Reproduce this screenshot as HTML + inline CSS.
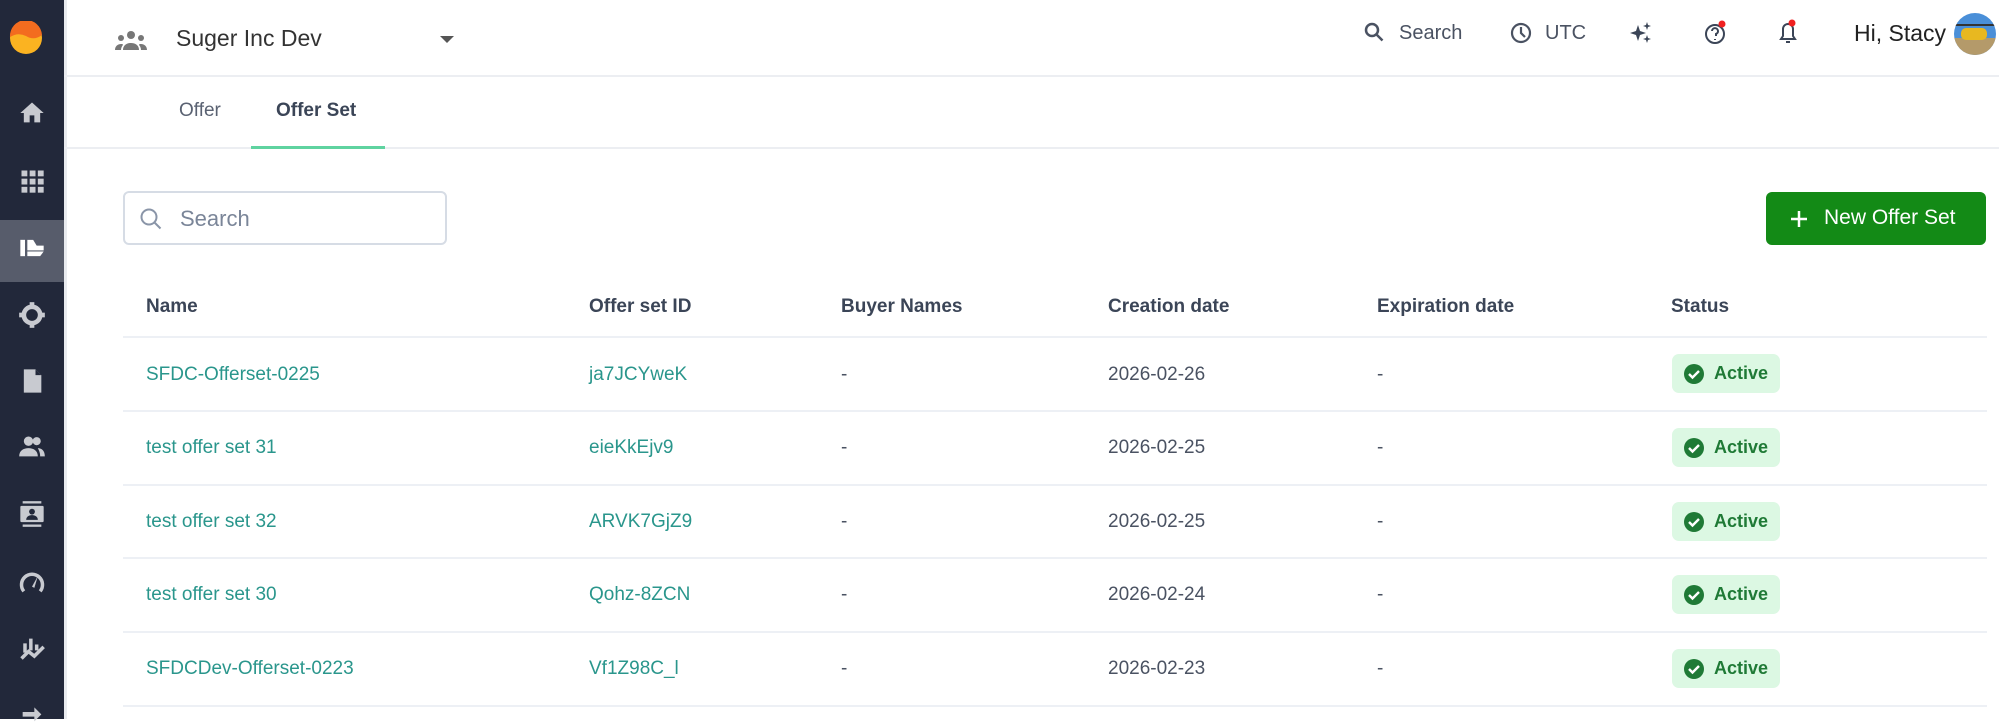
<!DOCTYPE html>
<html><head><meta charset="utf-8"><style>
*{margin:0;padding:0;box-sizing:border-box}
body{width:1999px;height:719px;overflow:hidden;background:#fff;font-family:"Liberation Sans",sans-serif;position:relative;color:#3d4656}
.sb{position:absolute;left:0;top:0;width:64px;height:719px;background:#22283a}
.sb .act{position:absolute;left:0;top:220px;width:64px;height:62px;background:#575c6b}
.ic{position:absolute;left:18px;width:28px;height:28px}
.a{position:absolute;white-space:nowrap}
.hline{position:absolute;left:64px;right:0;height:2px;background:#eceef2}
.row{position:absolute;left:123px;width:1864px;height:2px;background:#edf0f5}
.t{font-size:19px;color:#4a5262}
.l{font-size:19px;color:#2a968c}
.h{font-size:19px;color:#3b4557;font-weight:bold}
.badge{position:absolute;left:1672px;width:108px;height:39px;background:#dcf8e3;border-radius:7px;color:#1f7a36;font-weight:bold;font-size:18px;line-height:39px;padding-left:42px}
.badge svg{position:absolute;left:12px;top:10px}
</style></head><body>
<div class="sb">
<svg style="position:absolute;left:9px;top:21px" width="34" height="34" viewBox="0 0 34 34"><circle cx="17" cy="17" r="16" fill="#fbb321"/><path d="M1 16 A16 16 0 0 1 33 14 Q25 20 17 15 Q9 11 1 16Z" fill="#f36c1f"/></svg>
<div class="act"></div>
<svg class="ic" style="top:99px" viewBox="0 0 24 24"><path d="M10 20v-6h4v6h5v-8h3L12 3 2 12h3v8z" fill="#c8cad0"/></svg>
<svg class="ic" style="top:167px" viewBox="0 0 24 24" fill="#c8cad0"><rect x="3" y="3" width="5" height="5"/><rect x="10" y="3" width="5" height="5"/><rect x="17" y="3" width="5" height="5"/><rect x="3" y="10" width="5" height="5"/><rect x="10" y="10" width="5" height="5"/><rect x="17" y="10" width="5" height="5"/><rect x="3" y="17" width="5" height="5"/><rect x="10" y="17" width="5" height="5"/><rect x="17" y="17" width="5" height="5"/></svg>
<svg class="ic" style="top:234px" viewBox="0 0 24 24" fill="#fff"><rect x="2" y="5" width="4" height="14"/><path d="M8 5h5l3 5h6v4H8z M8 15h14l-3 4H8z"/></svg>
<svg class="ic" style="top:301px" viewBox="0 0 24 24"><circle cx="12" cy="12" r="7" fill="none" stroke="#c8cad0" stroke-width="4"/><g fill="#c8cad0"><rect x="10" y="1" width="4" height="4"/><rect x="10" y="19" width="4" height="4"/><rect x="1" y="10" width="4" height="4"/><rect x="19" y="10" width="4" height="4"/></g></svg>
<svg class="ic" style="top:367px" viewBox="0 0 24 24"><path d="M5 2h10l5 5v15H5z" fill="#c8cad0"/><path d="M15 2v5h5" fill="#22283a"/></svg>
<svg class="ic" style="top:433px" viewBox="0 0 24 24" fill="#c8cad0"><circle cx="9" cy="7" r="4"/><circle cx="16" cy="7" r="3.5"/><path d="M1 20c0-5 4-7 8-7s8 2 8 7z M17 13c3 0 6 2 6 7h-4c0-3-1-5-2-7z"/></svg>
<svg class="ic" style="top:500px" viewBox="0 0 24 24" fill="#c8cad0"><rect x="4" y="1" width="16" height="2"/><rect x="4" y="21" width="16" height="2"/><rect x="2" y="5" width="20" height="14" rx="1"/><circle cx="12" cy="10" r="2.5" fill="#22283a"/><path d="M7 17c0-3 3-4 5-4s5 1 5 4z" fill="#22283a"/></svg>
<svg class="ic" style="top:568px" viewBox="0 0 24 24"><path d="M5 20A9 9 0 1 1 19 20" fill="none" stroke="#c8cad0" stroke-width="3"/><path d="M12 16L17 7l-3 10z" fill="#c8cad0"/></svg>
<svg class="ic" style="top:634px" viewBox="0 0 24 24" fill="none" stroke="#c8cad0" stroke-width="3"><path d="M6 8v8M11 4v10M16 9v5M3 21l6-6 5 4 8-8"/></svg>
<svg class="ic" style="top:698px" viewBox="0 0 24 24" fill="#c8cad0"><path d="M4 12h10V8l6 6-6 6v-4H4z"/></svg>
</div>
<div style="position:absolute;left:64px;top:0;width:3px;height:719px;background:#e9ebef"></div>
<svg class="a" style="left:114px;top:30px" width="34" height="22" viewBox="0 0 34 22" fill="#777"><circle cx="17" cy="5" r="4"/><circle cx="7" cy="8" r="3"/><circle cx="27" cy="8" r="3"/><path d="M9 20c0-5 4-7 8-7s8 2 8 7z M1 20c0-4 3-6 6-6 1 0 2 0 2 1-1 1-2 3-2 5z M33 20c0-4-3-6-6-6-1 0-2 0-2 1 1 1 2 3 2 5z"/></svg>
<div class="a" style="left:176px;top:25px;font-size:23px;color:#333">Suger Inc Dev</div>
<svg class="a" style="left:440px;top:36px" width="14" height="8"><path d="M0 0h14L7 7z" fill="#555"/></svg>
<svg class="a" style="left:1364px;top:22px" width="20" height="22" fill="none" stroke="#4a5262" stroke-width="2.5"><circle cx="8" cy="8" r="6"/><path d="M12.5 12.5l6 6"/></svg>
<div class="a" style="left:1399px;top:22px;font-size:20px;color:#4a5262">Search</div>
<svg class="a" style="left:1510px;top:22px" width="22" height="22" fill="none" stroke="#4a5262" stroke-width="2.2"><circle cx="11" cy="11" r="9"/><path d="M11 5v6l4 4"/></svg>
<div class="a" style="left:1545px;top:22px;font-size:20px;color:#4a5262">UTC</div>
<svg class="a" style="left:1629px;top:21px" width="24" height="24" fill="#3b4557"><path d="M9 4l2 6 6 2-6 2-2 6-2-6-6-2 6-2z M18 1l1 3 3 1-3 1-1 3-1-3-3-1 3-1z M18 14l1 3 3 1-3 1-1 3-1-3-3-1 3-1z"/></svg>
<svg class="a" style="left:1704px;top:20px" width="26" height="26" fill="none" stroke="#3b4557" stroke-width="2"><circle cx="11" cy="14" r="9"/><path d="M8 11a3 3 0 1 1 4 3v2M11 19v1"/><circle cx="18" cy="4" r="3.5" fill="#f02020" stroke="none"/></svg>
<svg class="a" style="left:1776px;top:18px" width="26" height="28" fill="none" stroke="#3b4557" stroke-width="2"><path d="M5 21h14l-2-3V11a5 5 0 0 0-10 0v7z M10 24h4"/><circle cx="16" cy="5" r="3.5" fill="#f02020" stroke="none"/></svg>
<div class="a" style="left:1854px;top:20px;font-size:23px;color:#222">Hi, Stacy</div>
<svg class="a" style="left:1953px;top:12px" width="44" height="44"><defs><clipPath id="c"><circle cx="22" cy="22" r="21"/></clipPath></defs><g clip-path="url(#c)"><rect width="44" height="44" fill="#4a8fd8"/><rect y="26" width="44" height="18" fill="#b49a6a"/><rect x="8" y="16" width="26" height="12" rx="5" fill="#e8b820"/><rect x="2" y="12" width="40" height="2" fill="#333"/></g></svg>
<div class="hline" style="top:75px"></div>
<div class="a" style="left:179px;top:100px;font-size:19px;color:#5a6272">Offer</div>
<div class="a" style="left:276px;top:100px;font-size:19px;color:#3b4557;font-weight:bold">Offer Set</div>
<div class="hline" style="top:147px"></div>
<div class="a" style="left:251px;top:146px;width:134px;height:3px;background:#5fd3a0"></div>
<div class="a" style="left:123px;top:191px;width:324px;height:54px;border:2px solid #d6dce5;border-radius:6px"></div>
<svg class="a" style="left:139px;top:207px" width="24" height="24" fill="none" stroke="#8a95a8" stroke-width="2"><circle cx="10" cy="10" r="7.5"/><path d="M15.5 15.5l6 6"/></svg>
<div class="a" style="left:180px;top:206px;font-size:22px;color:#7a8598">Search</div>
<div class="a" style="left:1766px;top:192px;width:220px;height:53px;background:#138a16;border-radius:6px"></div>
<svg class="a" style="left:1790px;top:210px" width="18" height="18" stroke="#fff" stroke-width="2.5"><path d="M9 1v16M1 9h16"/></svg>
<div class="a" style="left:1824px;top:206px;font-size:21px;color:#fff">New Offer Set</div>
<div class="a h" style="left:146px;top:296px">Name</div>
<div class="a h" style="left:589px;top:296px">Offer set ID</div>
<div class="a h" style="left:841px;top:296px">Buyer Names</div>
<div class="a h" style="left:1108px;top:296px">Creation date</div>
<div class="a h" style="left:1377px;top:296px">Expiration date</div>
<div class="a h" style="left:1671px;top:296px">Status</div>
<div class="row" style="top:336px"></div>
<div class="a l" style="left:146px;top:364px">SFDC-Offerset-0225</div>
<div class="a l" style="left:589px;top:364px">ja7JCYweK</div>
<div class="a t" style="left:841px;top:364px">-</div>
<div class="a t" style="left:1108px;top:364px">2026-02-26</div>
<div class="a t" style="left:1377px;top:364px">-</div>
<div class="badge" style="top:354px"><svg width="20" height="20"><circle cx="10" cy="10" r="10" fill="#1f7a36"/><path d="M5 10l3.5 3.5L15 7" fill="none" stroke="#fff" stroke-width="2.4"/></svg>Active</div>
<div class="row" style="top:410px"></div>
<div class="a l" style="left:146px;top:437px">test offer set 31</div>
<div class="a l" style="left:589px;top:437px">eieKkEjv9</div>
<div class="a t" style="left:841px;top:437px">-</div>
<div class="a t" style="left:1108px;top:437px">2026-02-25</div>
<div class="a t" style="left:1377px;top:437px">-</div>
<div class="badge" style="top:428px"><svg width="20" height="20"><circle cx="10" cy="10" r="10" fill="#1f7a36"/><path d="M5 10l3.5 3.5L15 7" fill="none" stroke="#fff" stroke-width="2.4"/></svg>Active</div>
<div class="row" style="top:484px"></div>
<div class="a l" style="left:146px;top:511px">test offer set 32</div>
<div class="a l" style="left:589px;top:511px">ARVK7GjZ9</div>
<div class="a t" style="left:841px;top:511px">-</div>
<div class="a t" style="left:1108px;top:511px">2026-02-25</div>
<div class="a t" style="left:1377px;top:511px">-</div>
<div class="badge" style="top:502px"><svg width="20" height="20"><circle cx="10" cy="10" r="10" fill="#1f7a36"/><path d="M5 10l3.5 3.5L15 7" fill="none" stroke="#fff" stroke-width="2.4"/></svg>Active</div>
<div class="row" style="top:557px"></div>
<div class="a l" style="left:146px;top:584px">test offer set 30</div>
<div class="a l" style="left:589px;top:584px">Qohz-8ZCN</div>
<div class="a t" style="left:841px;top:584px">-</div>
<div class="a t" style="left:1108px;top:584px">2026-02-24</div>
<div class="a t" style="left:1377px;top:584px">-</div>
<div class="badge" style="top:575px"><svg width="20" height="20"><circle cx="10" cy="10" r="10" fill="#1f7a36"/><path d="M5 10l3.5 3.5L15 7" fill="none" stroke="#fff" stroke-width="2.4"/></svg>Active</div>
<div class="row" style="top:631px"></div>
<div class="a l" style="left:146px;top:658px">SFDCDev-Offerset-0223</div>
<div class="a l" style="left:589px;top:658px">Vf1Z98C_l</div>
<div class="a t" style="left:841px;top:658px">-</div>
<div class="a t" style="left:1108px;top:658px">2026-02-23</div>
<div class="a t" style="left:1377px;top:658px">-</div>
<div class="badge" style="top:649px"><svg width="20" height="20"><circle cx="10" cy="10" r="10" fill="#1f7a36"/><path d="M5 10l3.5 3.5L15 7" fill="none" stroke="#fff" stroke-width="2.4"/></svg>Active</div>
<div class="row" style="top:705px"></div>
</body></html>
